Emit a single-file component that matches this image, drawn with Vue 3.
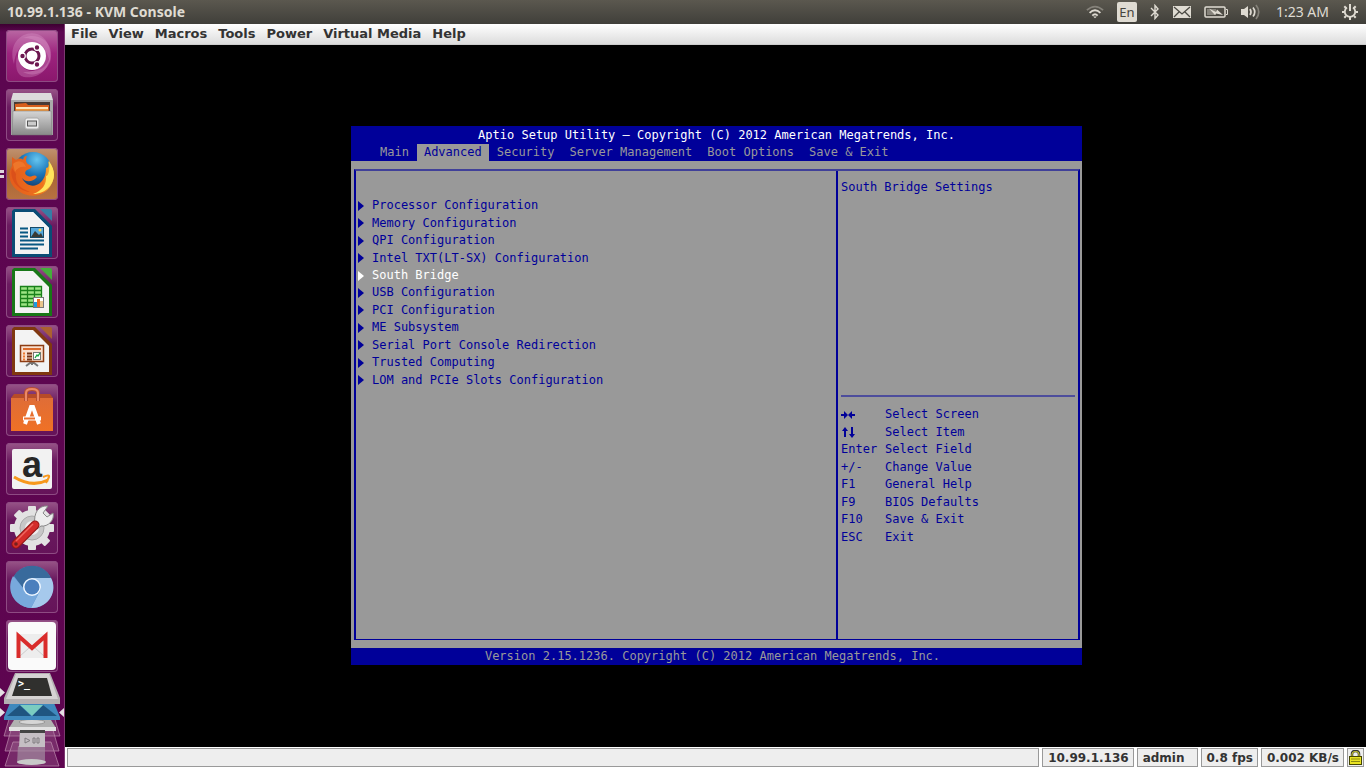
<template>
  <div class="desktop">
    <header class="top-panel">
      <h1 class="window-title">10.99.1.136 - KVM Console</h1>
      <div class="indicators">
        <button class="indicator" aria-label="Network">
          <svg width="18" height="16" viewBox="0 0 20 16" fill="none" stroke-width="2">
            <path d="M1 6Q10-2 19 6" stroke="#85827a" />
            <path d="M4 9Q10 3 16 9M7 12Q10 9 13 12" stroke="#dfdbd2" />
            <path d="M8 13L10 15L12 13Z" fill="#dfdbd2" />
          </svg>
        </button>
        <button class="indicator lang">En</button>
        <button class="indicator" aria-label="Bluetooth">
          <svg width="10" height="16" viewBox="0 0 10 16" fill="none" stroke="#dfdbd2" stroke-width="1.4">
            <path d="M1 4L8 11L5 14.5V1.5L8 5L1 12" />
          </svg>
        </button>
        <button class="indicator" aria-label="Messages">
          <svg width="18" height="12" viewBox="0 0 18 12">
            <path d="M0 0H18V12H0Z" fill="#dfdbd2" />
            <path d="M1 1L9 8L17 1M1 11L6 6M17 11L12 6" fill="none" stroke="#4b4943" stroke-width="1.3" />
          </svg>
        </button>
        <button class="indicator" aria-label="Battery">
          <svg width="24" height="12" viewBox="0 0 24 12">
            <rect x="1" y="1" width="20" height="10" rx="1" fill="none" stroke="#dfdbd2" stroke-width="1.5" />
            <path d="M22 3.500h1.500v5h-1.500" fill="none" stroke="#dfdbd2" />
            <path d="M3 3H12V9H3Z" fill="#85827a" />
            <path d="M5 2.500L12 6L13 3.500L19 9L12 7.500L11 9Z" fill="#dfdbd2" />
          </svg>
        </button>
        <button class="indicator" aria-label="Sound">
          <svg width="20" height="16" viewBox="0 0 20 16" fill="none" stroke="#dfdbd2" stroke-width="1.700">
            <path d="M0 5H3L7 2V14L3 11H0Z" fill="#dfdbd2" stroke="none" />
            <path d="M9 5Q11 8 9 11M12 3.500Q15.500 8 12 12.500" />
            <path d="M15 1Q20.500 8 15 15" stroke="#85827a" />
          </svg>
        </button>
        <button class="indicator clock">1:23 AM</button>
        <button class="indicator" aria-label="Session">
          <svg width="16" height="16" viewBox="0 0 16 16" fill="none" stroke="#dfdbd2">
            <path d="M5 3.500A5.200 5.200 0 1 0 11 3.500" stroke-width="1.800" />
            <path d="M8 0V7" stroke-width="2" />
            <path d="M0 8H2.500M13.500 8H16M8 13V16M2.300 2.300L4 4M12 4L13.700 2.300M2.300 13.700L4 12M12 12L13.700 13.700" stroke-width="2" />
          </svg>
        </button>
      </div>
    </header>

    <div class="workspace">
      <nav class="launcher" aria-label="Launcher">
        <button class="tile dash" aria-label="Dash">
          <svg viewBox="0 0 52 52">
            <g fill="#e0a3d0" fill-opacity=".3">
              <path d="M8 34C1 12 18 0 31 4C43 8 46 22 44 34C42 20 34 11 24 12C14 14 9 23 8 34Z" />
              <path d="M17 8C36 0 51 17 43 34C37 46 24 46 17 42C30 43 40 35 40 25C40 16 32 8 17 8Z" />
              <path d="M44 26C43 42 30 49 18 47C10 45 9 36 11 25C13 36 20 42 28 41C37 40 42 35 44 26Z" />
            </g>
            <circle cx="26" cy="26" r="14" fill="#fff" />
            <circle cx="26" cy="26" r="7" fill="none" stroke="#6c174f" stroke-width="3" />
            <g fill="#6c174f" stroke="#fff" stroke-width="1.200">
              <circle cx="16.500" cy="26" r="2.800" />
              <circle cx="31" cy="17.500" r="2.800" />
              <circle cx="31" cy="34.500" r="2.800" />
            </g>
          </svg>
        </button>
        <button class="tile" aria-label="Files">
          <svg viewBox="0 0 52 52">
            <defs>
              <linearGradient id="cabinet" x1="0" y1="0" x2="0" y2="1">
                <stop offset="0" stop-color="#d5d5d5" />
                <stop offset="1" stop-color="#898989" />
              </linearGradient>
            </defs>
            <path d="M7 4H45L47 11V46H5V11Z" fill="#dcdcdc" />
            <path d="M5 11H47V46H5Z" fill="#aaa" />
            <path d="M8 13H44V23H8Z" fill="#473b36" />
            <path d="M9 15L20 14L22 16H43V23H9Z" fill="#d75f1c" />
            <path d="M10 18H42V20H10Z" fill="#fbe6ba" />
            <path d="M10 20H42V23H10Z" fill="#f0963d" />
            <path d="M7 22H45L46 46H6Z" fill="url(#cabinet)" stroke="#777" stroke-width=".5" />
            <rect x="19" y="29" width="14" height="11" rx="2" fill="#ededed" stroke="#aaa" />
            <rect x="21.500" y="32" width="9" height="5" fill="#ccc" stroke="#555" />
          </svg>
        </button>
        <button class="tile firefox" aria-label="Firefox">
          <svg viewBox="0 0 52 52">
            <defs>
              <radialGradient id="globe" cx=".6" cy=".2" r=".8">
                <stop offset="0" stop-color="#65c5ef" />
                <stop offset=".5" stop-color="#1a75b9" />
                <stop offset="1" stop-color="#143562" />
              </radialGradient>
              <linearGradient id="fox" x1="0" y1="0" x2="1" y2="0">
                <stop offset="0" stop-color="#e35c1c" />
                <stop offset=".75" stop-color="#ee721c" />
                <stop offset="1" stop-color="#fbdc45" />
              </linearGradient>
            </defs>
            <circle cx="27" cy="23" r="19" fill="url(#globe)" />
            <path d="M6 9L10 12C13 10 16 10 17 12C18 8 20 8 21 8C19 12 20 16 24 17C27 18 26 20 21 22C18 24 19 27 22 28C26 30 28 25 31 29C26 35 19 34 16 30C19 37 28 41 35 34C39 30 40 25 40 20C43 20 43 17 42 13C48 19 50 29 45 37C39 48 25 51 14 44C3 38 1 26 6 18Z" fill="url(#fox)" />
            <path d="M43 13C50 23 49 31 44 38C39 44 33 46 27 46C36 43 41 36 40 28C43 28 44 20 43 13Z" fill="#ffe45b" />
            <path d="M6 20C3 30 11 43 24 44C12 40 9 33 10 26Z" fill="#d5481a" opacity=".65" />
            <path d="M7 16C12 11 18 13 20 19C15 18 11 20 9 24Z" fill="#ee762a" />
          </svg>
        </button>
        <button class="tile" aria-label="LibreOffice Writer">
          <svg viewBox="0 0 52 52">
            <path d="M8 2H29L46 19V50H6V4Z" fill="#0a4c75" />
            <path d="M34 2H44Q46 2 46 4V14Z" fill="#367da5" />
            <path d="M9 5H27L43 21V47H9Z" fill="#f3f3f3" />
            <path d="M27 5L43 21V22L26 5Z" fill="#fff" />
            <path d="M14 21.500H22M14 25.500H22M14 29.500H22M14 33.500H38M14 37.500H38M14 41.500H32" stroke="#075782" stroke-width="2" />
            <rect x="24.500" y="20.500" width="13" height="10" fill="#56a9dc" stroke="#164b69" />
            <path d="M25 30L29 24L33 28L35 26L37 30Z" fill="#393b35" />
            <circle cx="34" cy="23" r="1.500" fill="#ffd650" />
          </svg>
        </button>
        <button class="tile" aria-label="LibreOffice Calc">
          <svg viewBox="0 0 52 52">
            <path d="M8 2H29L46 19V50H6V4Z" fill="#187717" />
            <path d="M34 2H44Q46 2 46 4V14Z" fill="#45ad3b" />
            <path d="M9 5H27L43 21V47H9Z" fill="#f3f3f3" />
            <rect x="14" y="20" width="22" height="20" fill="#9de484" />
            <path d="M14.500 20.500H35.500V40.500H14.500ZM14 24.500H36M14 28.500H36M14 32.500H36M14 36.500H36M21.500 20V40M28.500 20V40" fill="none" stroke="#19811a" stroke-width="1.300" />
            <rect x="27.500" y="31.500" width="10" height="10" fill="#fff" stroke="#777" />
            <path d="M28 36H31V41H28Z" fill="#1b9be1" />
            <path d="M31 33H34V41H31Z" fill="#ed691d" />
            <path d="M34 35H37V41H34Z" fill="#e8c58d" />
          </svg>
        </button>
        <button class="tile" aria-label="LibreOffice Impress">
          <svg viewBox="0 0 52 52">
            <path d="M8 2H29L46 19V50H6V4Z" fill="#803810" />
            <path d="M34 2H44Q46 2 46 4V14Z" fill="#ab6130" />
            <path d="M9 5H27L43 21V47H9Z" fill="#f3f3f3" />
            <path d="M26 37V40M20 41L24 38H28L32 41" fill="none" stroke="#777" stroke-width="2" />
            <rect x="14.500" y="20.500" width="23" height="16" fill="#f9dfce" stroke="#8d3c13" stroke-width="1.500" />
            <path d="M17 24H35" stroke="#db6b2c" stroke-width="2" />
            <path d="M17 28.500H19M17 31.500H19M17 34.500H19" stroke="#ed792d" stroke-width="2" />
            <path d="M21 28.500H26M21 31.500H26M21 34.500H26" stroke="#773517" stroke-width="2" />
            <rect x="27.500" y="27.500" width="7" height="7" fill="#fff" stroke="#777" />
            <path d="M29 33L31 30L32 31L34 28" fill="none" stroke="#17a541" stroke-width="1.300" />
          </svg>
        </button>
        <button class="tile" aria-label="Software Center">
          <svg viewBox="0 0 52 52">
            <defs>
              <linearGradient id="bag" x1="0" y1="0" x2="0" y2="1">
                <stop offset="0" stop-color="#df6d37" />
                <stop offset="1" stop-color="#f07125" />
              </linearGradient>
            </defs>
            <path d="M8 10H44L47 14V47H5V14Z" fill="#b64b28" />
            <path d="M5 14H47V47H5Z" fill="url(#bag)" />
            <path d="M20 17V9Q20 5 26 5Q32 5 32 9V17" fill="none" stroke="#b84e2f" stroke-width="4" />
            <path d="M20 17V9Q20 5 26 5Q32 5 32 9V17" fill="none" stroke="#eb8967" stroke-width="2" />
            <path d="M19 40L25 23H27L33 40" fill="none" stroke="#fff" stroke-width="4" />
            <path d="M17 34.500H35" stroke="#fff" stroke-width="4" />
            <path d="M18 34.500H29" stroke="#ed7130" stroke-width="2" />
          </svg>
        </button>
        <button class="tile" aria-label="Amazon">
          <svg viewBox="0 0 52 52">
            <rect x="6" y="6" width="40" height="40" rx="2" fill="#f2f2f2" />
            <text x="26" y="34" text-anchor="middle" class="amazon-letter">a</text>
            <path d="M8 34Q26 45 42 37" fill="none" stroke="#f7981d" stroke-width="3" />
            <path d="M37 34Q44 31 43 34L40 40" fill="none" stroke="#f7981d" stroke-width="2" />
          </svg>
        </button>
        <button class="tile" aria-label="System Settings">
          <svg viewBox="0 0 52 52">
            <g fill="#e2e2e2">
              <circle cx="26" cy="26" r="18" />
              <rect v-for="angle in gearAngles" :key="angle" x="22" y="4" width="8" height="44" rx="1" :transform="`rotate(${angle} 26 26)`" />
            </g>
            <circle cx="26" cy="26" r="12" fill="#c7c7c7" stroke="#aaa" />
            <circle cx="26" cy="26" r="7" fill="#eee" />
            <path d="M29 22C27 11 33 3 42 4L37 11L41 15L47 11C49 18 42 25 35 24L31 27L26 22Z" fill="#ededed" stroke="#888" />
            <path d="M10 42L29 23" stroke="#8f1413" stroke-width="9" stroke-linecap="round" />
            <path d="M10 42L29 23" stroke="#d42c29" stroke-width="7" stroke-linecap="round" />
            <path d="M10 39L27 22" stroke="#ef6660" stroke-width="1.500" />
            <circle cx="10" cy="42" r="1.800" fill="#74201d" />
          </svg>
        </button>
        <button class="tile" aria-label="Chromium">
          <svg viewBox="0 0 52 52">
            <circle cx="26" cy="26" r="21" fill="#6598cf" />
            <path d="M8 15C17 0 39 2 45 17H26L17 27Z" fill="#386a9c" />
            <path d="M45 17H26L35 28L25 47C44 47 52 29 45 17Z" fill="#a6c9ec" />
            <path d="M17 27L7 15C-1 30 9 46 25 47L32 33Z" fill="#78a9dc" />
            <circle cx="26" cy="26" r="9" fill="#edf6ff" />
            <circle cx="26" cy="26" r="7.500" fill="#4b7fbd" />
          </svg>
        </button>
        <button class="tile" aria-label="Gmail">
          <svg viewBox="0 0 52 52">
            <rect x="2" y="2" width="48" height="48" rx="4" fill="#fafafa" />
            <path d="M11 14H41V38H11Z" fill="#ededed" />
            <path d="M14 36L23 28M38 36L29 28" stroke="#ccc" />
            <path d="M12.500 38V16L26 28L39.500 16V38" fill="none" stroke="#d92c2b" stroke-width="4" />
          </svg>
        </button>
        <button class="stack" aria-label="More applications">
          <svg viewBox="0 0 65 96">
            <g fill="#a77099" fill-opacity=".35" stroke="#be8daf" stroke-width=".7">
              <path d="M10 44H54L60 64H4Z" />
              <path d="M11 58H53L59 79H5Z" />
              <path d="M13 70H51L59 94H5Z" />
            </g>
            <path d="M18 74H45V91H17Z" fill="#a38c9f" fill-opacity=".7" />
            <ellipse cx="31.500" cy="90" rx="14.500" ry="3" fill="#c9c9c9" />
            <path d="M20 58H45V75H19Z" fill="#c5bfc4" />
            <path d="M25 66L30 68.500L25 71ZM33 66H35V71H33ZM37 66H39V71H37Z" fill="none" stroke="#807c80" />
            <path d="M14 48H51L56 56H9Z" fill="#b1b1b1" />
            <ellipse cx="32" cy="50" rx="13" ry="2.500" fill="#d6d6d6" stroke="#999" />
            <path d="M9 55H56V59H9Z" fill="#e2e2e2" />
            <path d="M20 58H45V61H20Z" fill="#444" />
            <path d="M10 31H54L60 45V48H4V45Z" fill="#3f89bd" />
            <path d="M7 44L20 33L31 44Z" fill="#1f5580" />
            <path d="M32 44L43 33L57 44Z" fill="#1f5580" />
            <path d="M20 33H43L32 44Z" fill="#7accc0" />
            <path d="M15 1H50L60 26V32H4V26Z" fill="#b4b0b2" />
            <path d="M16 2H49L58 27H6Z" fill="#d5d3d3" />
            <path d="M18 6H47L52 24H12Z" fill="#30302e" />
            <text x="18" y="15" class="prompt">&gt;_</text>
            <path d="M0 16L5 20.500L0 25ZM0 36L5 40.500L0 45ZM64 36L59 40.500L64 45Z" fill="#e5dfe4" />
          </svg>
        </button>
      </nav>

      <section class="console">
        <nav class="menu-bar">
          <button v-for="menu in menus" :key="menu">{{ menu }}</button>
        </nav>

        <main class="viewport">
          <div class="bios">
            <div class="bios-header">
              <h2>Aptio Setup Utility – Copyright (C) 2012 American Megatrends, Inc.</h2>
              <nav class="bios-tabs">
                <button v-for="tab in tabs" :key="tab" :class="{ active: tab === activeTab }" @click="activeTab = tab">{{ tab }}</button>
              </nav>
            </div>
            <div class="bios-body">
              <div class="bios-frame">
                <div class="settings">
                  <button
                    v-for="item in settings"
                    :key="item"
                    :class="{ selected: item === selected }"
                    @click="selected = item"
                  >
                    <svg width="6" height="10" viewBox="0 0 6 10"><path d="M0 0L6 5L0 10Z" fill="currentColor" /></svg>
                    {{ item }}
                  </button>
                </div>
                <aside class="help">
                  <p class="help-text">South Bridge Settings</p>
                  <dl class="keys">
                    <div v-for="hint in hints" :key="hint.text">
                      <dt>
                        <svg v-if="hint.icon === 'horizontal'" width="14" height="8" viewBox="0 0 14 8">
                          <path d="M0 4H5M9 4H14" stroke="currentColor" stroke-width="2" />
                          <path d="M3 0L7 4L3 8ZM11 0L7 4L11 8Z" fill="currentColor" />
                        </svg>
                        <svg v-else-if="hint.icon === 'vertical'" width="14" height="11" viewBox="0 0 14 11">
                          <path d="M4 2V10M11 0V8" stroke="currentColor" stroke-width="2" />
                          <path d="M1 4L4 0L7 4ZM8 7L11 11L14 7Z" fill="currentColor" />
                        </svg>
                        <template v-else>{{ hint.key }}</template>
                      </dt>
                      <dd>{{ hint.text }}</dd>
                    </div>
                  </dl>
                </aside>
              </div>
            </div>
            <div class="bios-footer">Version 2.15.1236. Copyright (C) 2012 American Megatrends, Inc.</div>
          </div>
        </main>

        <footer class="status-bar">
          <div class="cell message"></div>
          <div class="cell">10.99.1.136</div>
          <div class="cell user">admin</div>
          <div class="cell">0.8 fps</div>
          <div class="cell">0.002 KB/s</div>
          <div class="cell lock">
            <svg width="13" height="15" viewBox="0 0 13 15">
              <path d="M3 7V4Q3 1 6.500 1Q10 1 10 4V7" fill="none" stroke="#333" stroke-width="2.500" />
              <path d="M3 7V4Q3 1.500 6.500 1.500Q10 1.500 10 4V7" fill="none" stroke="#dedc32" />
              <rect x=".5" y="6.500" width="12" height="8" fill="#e9e323" stroke="#444500" />
              <path d="M2 9H11M2 11.500H11" stroke="#8b8912" />
            </svg>
          </div>
        </footer>
      </section>
    </div>
    <span class="running" aria-hidden="true"></span>
  </div>
</template>

<script setup>
import { ref } from 'vue'

const menus = ['File', 'View', 'Macros', 'Tools', 'Power', 'Virtual Media', 'Help']
const tabs = ['Main', 'Advanced', 'Security', 'Server Management', 'Boot Options', 'Save & Exit']
const settings = [
  'Processor Configuration',
  'Memory Configuration',
  'QPI Configuration',
  'Intel TXT(LT-SX) Configuration',
  'South Bridge',
  'USB Configuration',
  'PCI Configuration',
  'ME Subsystem',
  'Serial Port Console Redirection',
  'Trusted Computing',
  'LOM and PCIe Slots Configuration'
]
const hints = [
  { icon: 'horizontal', text: 'Select Screen' },
  { icon: 'vertical', text: 'Select Item' },
  { key: 'Enter', text: 'Select Field' },
  { key: '+/-', text: 'Change Value' },
  { key: 'F1', text: 'General Help' },
  { key: 'F9', text: 'BIOS Defaults' },
  { key: 'F10', text: 'Save & Exit' },
  { key: 'ESC', text: 'Exit' }
]
const gearAngles = [0, 45, 90, 135]

const activeTab = ref('Advanced')
const selected = ref('South Bridge')
</script>

<style>
body {
  margin: 0;
  background: #000;
}
</style>

<style scoped>
.desktop {
  position: relative;
  display: flex;
  flex-direction: column;
  height: 100vh;
  overflow: hidden;
  background: #000;
}
button {
  margin: 0;
  padding: 0;
  border: none;
  background: none;
  font: inherit;
  color: inherit;
  white-space: nowrap;
}
svg {
  display: block;
  flex: none;
}

/* top panel */
.top-panel {
  display: flex;
  justify-content: space-between;
  align-items: center;
  height: 24px;
  padding: 0 8px 0 7px;
  background: linear-gradient(#5b584f, #403f3a);
  color: #dfdbd2;
  font-family: "Noto Sans", "Open Sans", sans-serif;
}
.window-title {
  margin: 0;
  padding-bottom: 2px;
  font-size: 14px;
  font-weight: bold;
}
.indicators {
  display: flex;
  align-items: center;
  gap: 13px;
}
.lang {
  width: 20px;
  height: 20px;
  border-radius: 2px;
  background: #dfdbd2;
  color: #45443e;
  font-size: 13px;
}
.clock {
  margin-left: 2px;
  padding-bottom: 2px;
  font-size: 14px;
}

.workspace {
  display: flex;
  flex: 1;
  min-height: 0;
}

/* launcher */
.launcher {
  display: flex;
  flex: none;
  flex-direction: column;
  align-items: center;
  gap: 7px;
  box-sizing: border-box;
  width: 65px;
  padding-top: 6px;
  border-right: 1px solid #7c3970;
  background: linear-gradient(#3d0031, #5c0650 8px, #5e0550);
}
.tile {
  flex: none;
  box-sizing: border-box;
  width: 52px;
  height: 52px;
  border-radius: 4px;
  background: linear-gradient(#985588, #6b1b60 35%, #651359);
  box-shadow: inset 0 0 0 1px #8e4b83;
}
.tile svg {
  width: 52px;
  height: 52px;
}
.tile.dash {
  background: linear-gradient(#b968a3, #9d237e 45%, #8a176c);
}
.tile.firefox {
  background: linear-gradient(#c09270, #a86634 50%, #b87241);
}
.stack {
  flex: none;
  width: 64px;
  height: 96px;
  margin-top: -7px;
}
.stack svg {
  width: 65px;
  height: 96px;
}
.amazon-letter {
  font: bold 36px "Liberation Sans", sans-serif;
  fill: #272727;
}
.prompt {
  font: bold 10px "DejaVu Sans Mono", monospace;
  fill: #fff;
}
/* two-window marks beside the running browser */
.running {
  position: absolute;
  top: 170px;
  left: 0;
  width: 4px;
  height: 2px;
  border-top: 3px solid #ded5dc;
  border-bottom: 3px solid #ded5dc;
}

/* console window */
.console {
  display: flex;
  flex: 1;
  flex-direction: column;
  min-width: 0;
  font: bold 13px "DejaVu Sans", sans-serif;
  color: #333;
}
.menu-bar {
  display: flex;
  align-items: center;
  gap: 11px;
  box-sizing: border-box;
  height: 21px;
  padding: 0 6px 2px;
  border-bottom: 1px solid #ccc;
  background: linear-gradient(#fff, #dcdcdc);
}
.viewport {
  display: flex;
  flex: 1;
  justify-content: center;
  align-items: center;
  padding: 0 0 1px 2px;
  background: #000;
}

/* setup screen */
.bios {
  display: flex;
  flex-direction: column;
  width: 731px;
  height: 539px;
  background: #999;
  color: #000099;
  font: 12px/17px "DejaVu Sans Mono", "Liberation Mono", monospace;
}
.bios-header {
  padding-top: 1px;
  background: #000099;
}
.bios-header h2 {
  margin: 0;
  font-size: 12px;
  font-weight: normal;
  color: #fff;
  text-align: center;
}
.bios-tabs {
  display: flex;
  gap: 1px;
  padding-left: 22px;
  color: #999;
}
.bios-tabs button {
  padding: 0 7px;
}
.bios-tabs .active {
  background: #999;
  color: #000099;
}
.bios-body {
  display: flex;
  flex: 1;
  padding: 8px 2px 8px 3px;
}
.bios-frame {
  display: grid;
  flex: 1;
  grid-template-columns: 1fr 242px;
  border: 2px solid #000099;
  border-top-color: #404099;
  border-bottom-width: 1px;
}
.settings {
  display: grid;
  grid-auto-rows: 1fr;
  align-self: start;
  height: 192px;
  padding: 26px 2px 0;
}
.settings button {
  display: flex;
  align-items: center;
  gap: 8px;
}
.settings .selected {
  color: #fff;
}
.help {
  display: flex;
  flex-direction: column;
  padding: 8px 3px 0;
  border-left: 2px solid #000099;
}
.help-text {
  height: 216px;
  margin: 0;
  border-bottom: 2px solid #4d4d9c;
}
.keys {
  display: grid;
  grid-auto-rows: 1fr;
  height: 140px;
  margin: 9px 0 0;
}
.keys div {
  display: flex;
  align-items: center;
}
.keys dt {
  width: 44px;
}
.keys dd {
  margin: 0;
}
.bios-footer {
  padding-right: 8px;
  background: #000099;
  color: #999;
  text-align: center;
}

/* status bar */
.status-bar {
  display: flex;
  gap: 3px;
  box-sizing: border-box;
  height: 21px;
  padding: 1px 2px;
  background: #fff;
  font-size: 12px;
}
.cell {
  display: flex;
  align-items: center;
  box-sizing: border-box;
  padding: 0 4px 0 5px;
  border: 1px solid #999;
  background: #eee;
  white-space: nowrap;
}
.message {
  flex: 1;
}
.user {
  padding-right: 12px;
}
.lock {
  padding: 0 1px;
}
</style>
